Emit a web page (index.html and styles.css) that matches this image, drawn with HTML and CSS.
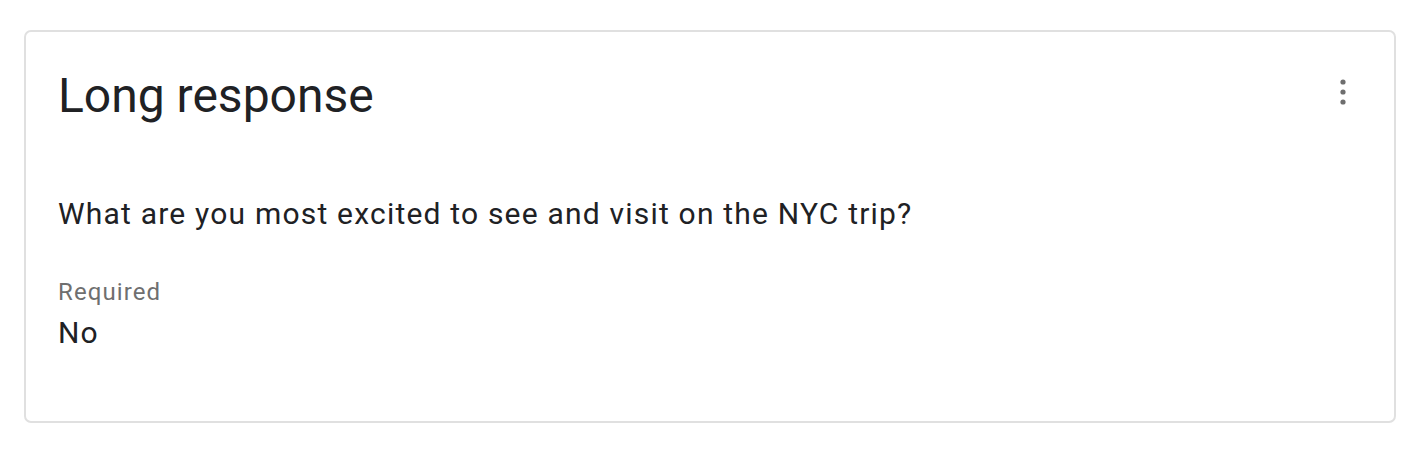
FILE: index.html
```html
<!DOCTYPE html>
<html lang="en">
<head>
<meta charset="utf-8">
<title>Long response</title>
<link rel="stylesheet" href="styles.css">
</head>
<body>
<div class="page">
  <section class="card">
    <header class="card-header">
      <h1 class="card-title">Long response</h1>
      <button class="more-btn" aria-label="More options">
        <svg width="10" height="30" viewBox="0 0 10 30" aria-hidden="true">
          <circle cx="5" cy="5" r="2.6"/>
          <circle cx="5" cy="15" r="2.6"/>
          <circle cx="5" cy="25" r="2.6"/>
        </svg>
      </button>
    </header>
    <p class="question">What are you most excited to see and visit on the NYC trip?</p>
    <div class="field">
      <div class="field-label">Required</div>
      <div class="field-value">No</div>
    </div>
  </section>
</div>
</body>
</html>
```

FILE: styles.css
```css
* { box-sizing: border-box; }
html, body { margin: 0; padding: 0; background: #ffffff; }
body {
  font-family: Roboto, "Noto Sans", "Liberation Sans", sans-serif;
  color: #202124;
}
.page {
  padding: 30px 24px;
}
.card {
  width: 1372px;
  height: 393px;
  border: 2px solid #e0e0e0;
  border-radius: 7px;
  padding: 36px 33px 0 32px;
}
.card-header {
  display: flex;
  align-items: flex-start;
  justify-content: space-between;
}
.card-title {
  margin: 0;
  font-size: 48px;
  line-height: 56px;
  font-weight: 400;
  color: #202124;
}
.more-btn {
  border: 0;
  background: none;
  padding: 0;
  margin: 9px 13px 0 0;
  width: 10px;
  height: 30px;
  display: flex;
  fill: #6e6e6e;
}
.question {
  margin: 72px 0 0 0;
  font-size: 30px;
  line-height: 36px;
  letter-spacing: 1.2px;
  color: #202124;
}
.field {
  margin-top: 44px;
}
.field-label {
  font-size: 24px;
  line-height: 32px;
  letter-spacing: 1.1px;
  color: #6f6f6f;
}
.field-value {
  margin-top: 7px;
  font-size: 30px;
  line-height: 36px;
  letter-spacing: 1.2px;
  color: #202124;
}
```
